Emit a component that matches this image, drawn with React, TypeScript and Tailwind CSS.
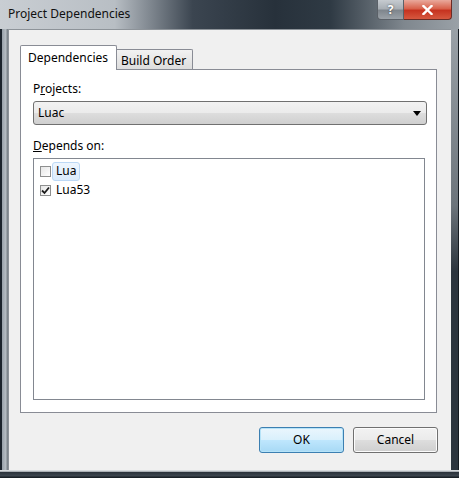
import React from 'react';

const font = { fontFamily: '"Segoe UI", "Noto Sans", "Open Sans", sans-serif' };

const CheckBox: React.FC<{ checked?: boolean }> = ({ checked }) => (
  <div className="w-[11px] h-[11px] border border-[#8e8f8f] bg-[linear-gradient(135deg,#e6e6e6,#ffffff)] flex items-center justify-center shrink-0">
    {checked && (
      <svg width="9" height="9" viewBox="0 0 9 9">
        <path d="M1 4.5 L3.5 7 L8 1.5" fill="none" stroke="#1c1c1c" strokeWidth="1.8" />
      </svg>
    )}
  </div>
);

export default function App() {
  return (
    <div className="w-[459px] h-[478px] flex flex-col bg-[#3a444e] text-[12px] text-black select-none" style={font}>
      {/* title bar */}
      <div className="h-[29px] flex items-start bg-[linear-gradient(90deg,#c9ced3_0%,#b8bec4_25%,#3b4550_42%,#27313b_60%,#2f3a44_72%,#7f878e_88%,#9aa1a7_100%)] relative">
        <div className="pl-[8px] pt-[6px] text-[12px] text-[#101010] leading-[16px]">Project Dependencies</div>
        <div className="absolute top-0 left-[377px] flex">
          <div className="w-[27px] h-[20px] rounded-bl-[4px] border border-[#5b6168] border-t-0 bg-[linear-gradient(180deg,#c6cbd0_0%,#a9afb5_45%,#7f868d_55%,#9ba2a8_100%)] flex items-center justify-center text-white font-bold text-[12px] [text-shadow:0_0_2px_#333]">?</div>
          <div className="w-[48px] h-[20px] rounded-br-[4px] border border-[#6b2b24] border-t-0 border-l-0 bg-[linear-gradient(180deg,#e9a99c_0%,#d8624c_45%,#c63320_55%,#d6583f_100%)] flex items-center justify-center">
            <svg width="11" height="10" viewBox="0 0 11 10">
              <path d="M1.5 1 L9.5 9 M9.5 1 L1.5 9" stroke="#ffffff" strokeWidth="2.4" strokeLinecap="square" />
            </svg>
          </div>
        </div>
      </div>

      <div className="flex flex-1">
        {/* left frame */}
        <div className="w-[8px] bg-[linear-gradient(90deg,#1b232b_0%,#1b232b_20%,#9aa3ab_30%,#b4bbc1_70%,#6f777e_100%)]" />
        {/* client */}
        <div className="w-[443px] bg-[#f0f0f0] border-l border-t border-[#8d9399] flex flex-col">
          <div className="ml-[11px] mt-[15px] flex items-end h-[25px]">
            <div className="w-[97px] h-[25px] bg-white border border-b-0 border-[#898c95] rounded-t-[2px] pl-[7px] pt-[3px] relative z-10">Dependencies</div>
            <div className="w-[76px] h-[21px] bg-[linear-gradient(180deg,#f2f2f2,#dcdcdc)] border border-l-0 border-b-0 border-[#898c95] rounded-tr-[2px] pl-[4px] pt-[2px]">Build Order</div>
          </div>
          <div className="ml-[11px] mt-[-1px] w-[417px] h-[344px] bg-white border border-[#898c95] flex flex-col pl-[12px]">
            <div className="mt-[11px] h-[16px] leading-[16px]">
              P<span className="underline">r</span>ojects:
            </div>
            <div className="mt-[4px] w-[394px] h-[24px] border border-[#707070] rounded-[3px] bg-[linear-gradient(180deg,#f2f2f2_0%,#ebebeb_48%,#dddddd_52%,#cfcfcf_100%)] flex items-center justify-between pl-[4px] pr-[5px]">
              <span>Luac</span>
              <svg width="8" height="5" viewBox="0 0 8 5">
                <path d="M0 0 L8 0 L4 5 Z" fill="#000" />
              </svg>
            </div>
            <div className="mt-[13px] h-[16px] leading-[16px]">
              <span className="underline">D</span>epends on:
            </div>
            <div className="mt-[4px] w-[392px] h-[242px] border border-[#828790] bg-white flex flex-col pl-[6px] pt-[2px]">
              <div className="flex items-center h-[20px]">
                <CheckBox />
                <div className="ml-[1px] h-[19px] px-[3px] flex items-center rounded-[3px] border border-[#bcd8f5] bg-[linear-gradient(180deg,#eef6fe,#dcecfc)]">Lua</div>
              </div>
              <div className="flex items-center h-[18px]">
                <CheckBox checked />
                <div className="ml-[5px]">Lua53</div>
              </div>
            </div>
          </div>
          <div className="mt-[14px] flex justify-end pr-[13px] gap-[9px]">
            <div className="w-[85px] h-[26px] rounded-[3px] border border-[#3c7fb1] bg-[linear-gradient(180deg,#eaf6fd_0%,#d9f0fc_48%,#bee6fd_52%,#a7d9f5_100%)] shadow-[inset_0_0_0_1px_#b6e3f8] flex items-center justify-center">OK</div>
            <div className="w-[85px] h-[26px] rounded-[3px] border border-[#707070] bg-[linear-gradient(180deg,#f2f2f2_0%,#ebebeb_48%,#dddddd_52%,#cfcfcf_100%)] shadow-[inset_0_0_0_1px_#fcfcfc] flex items-center justify-center">Cancel</div>
          </div>
        </div>
        {/* right frame */}
        <div className="w-[8px] bg-[linear-gradient(180deg,#9aa1a7_0%,#6c747b_40%,#2c353e_55%,#2c353e_100%)] border-r border-[#141a20]" />
      </div>
      {/* bottom frame */}
      <div className="h-[8px] bg-[linear-gradient(180deg,#d6dadd_0%,#d6dadd_15%,#2b333c_30%,#3b444d_70%,#10161c_100%)]" />
    </div>
  );
}
